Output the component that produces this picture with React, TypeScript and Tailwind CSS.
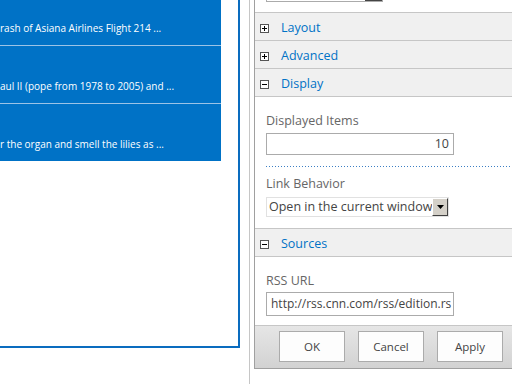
import React from "react";

const tiles = [
  "rash of Asiana Airlines Flight 214 ...",
  "aul II (pope from 1978 to 2005) and ...",
  "r the organ and smell the lilies as ...",
];

const PlusMinus = ({ open }: { open: boolean }) => (
  <span className="relative block w-[9px] h-[9px] border border-[#555] bg-white">
    <span className="absolute left-[1px] top-[3px] w-[5px] h-[1px] bg-black" />
    {!open && (
      <span className="absolute left-[3px] top-[1px] w-[1px] h-[5px] bg-black" />
    )}
  </span>
);

const Header = ({ title, open }: { title: string; open: boolean }) => (
  <div className="flex items-center h-[28px] pt-[4px] bg-[#f0f0f0] border-b border-[#c6c6c6] pl-[5px] gap-[12px]">
    <PlusMinus open={open} />
    <span className="text-[12.5px] text-[#0072c6]">{title}</span>
  </div>
);

const App = () => {
  return (
    <div
      className="relative w-[512px] h-[384px] overflow-hidden bg-white flex"
      style={{ fontFamily: '"Open Sans", "Noto Sans", sans-serif' }}
    >
      {/* web part zone */}
      <div className="w-[250px] h-[384px] border-r border-[#c6c6c6] shrink-0">
        <div className="w-[240px] h-[348px] border-r-2 border-b-2 border-[#0a6cbf]">
          <div className="w-[221px] flex flex-col">
            {tiles.map((t, i) => (
              <div
                key={i}
                className={
                  "bg-[#0072c6] text-white text-[10px] whitespace-nowrap overflow-hidden flex items-end pb-[9px] " +
                  (i === 0 ? "h-[45px]" : "h-[58px] border-t border-[#9cc3e6]")
                }
              >
                {t}
              </div>
            ))}
          </div>
        </div>
      </div>

      {/* tool pane */}
      <div className="ml-[4px] w-[270px] h-[369px] shrink-0 border-l border-b border-[#a0a0a0] flex flex-col">
        <div className="h-[13px] border-b border-[#c6c6c6] relative">
          <div className="absolute left-[11px] top-[-20px] w-[117px] h-[22px] border border-[#ababab] bg-white">
            <div className="absolute right-0 top-0 w-[17px] h-full bg-[#444]" />
          </div>
        </div>
        <Header title="Layout" open={false} />
        <Header title="Advanced" open={false} />
        <Header title="Display" open={true} />

        <div className="pl-[11px] pt-[16px] pb-[11px] text-[#666]">
          <div className="text-[12.5px] leading-[16px]">Displayed Items</div>
          <div className="mt-[4px] w-[188px] h-[22px] border border-[#ababab] text-right pr-[4px] text-[12.5px] leading-[20px] text-[#444]">
            10
          </div>
          <div className="mt-[11px] mr-[5px] h-[1px] bg-[repeating-linear-gradient(to_right,#3c7fc4_0_1px,transparent_1px_3px)]" />
          <div className="mt-[9px] text-[12.5px] leading-[16px]">Link Behavior</div>
          <div className="mt-[5px] flex w-[183px] h-[20px] border border-[#e1e1e1]">
            <span className="flex-1 text-[12.5px] leading-[18px] pl-[2px] text-[#444] whitespace-nowrap overflow-hidden">
              Open in the current window
            </span>
            <span className="w-[16px] h-[18px] bg-[#d4d0c8] border border-[#404040] border-t-white border-l-white flex items-center justify-center">
              <svg width="7" height="4" viewBox="0 0 7 4">
                <path d="M0 0H7L3.5 4Z" fill="#000" />
              </svg>
            </span>
          </div>
        </div>

        <div className="border-t border-[#c6c6c6]">
          <Header title="Sources" open={true} />
        </div>

        <div className="pl-[11px] pt-[16px] pb-[9px] text-[#666]">
          <div className="text-[12.5px] leading-[16px]">RSS URL</div>
          <div className="mt-[3px] w-[188px] h-[24px] border border-[#ababab] text-[12px] leading-[22px] pl-[4px] text-[#444] whitespace-nowrap overflow-hidden">
            http://rss.cnn.com/rss/edition.rs
          </div>
        </div>

        <div className="flex-1 border-t border-[#c6c6c6] bg-gradient-to-b from-[#e6e6e6] to-[#d2d2d2] flex items-start gap-[13px] pl-[24px] pt-[5px]">
          {["OK", "Cancel", "Apply"].map((b) => (
            <div
              key={b}
              className="w-[66px] h-[31px] bg-[#fdfdfd] border border-[#ababab] flex items-center justify-center text-[11.5px] text-[#444]"
            >
              {b}
            </div>
          ))}
        </div>
      </div>
    </div>
  );
};

export default App;
